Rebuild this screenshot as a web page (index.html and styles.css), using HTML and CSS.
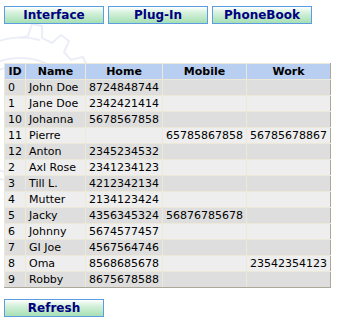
FILE: index.html
```html
<!DOCTYPE html>
<html lang="en">

<head>
    <meta charset="UTF-8">
    <title>PhoneBook</title>
    <link rel="stylesheet" href="styles.css">
</head>

<body>
    <svg class="watermark" width="180" height="200" viewBox="0 0 180 200">
        <g fill="none" stroke="#eceef7" stroke-width="2">
            <circle cx="20" cy="120" r="62" />
            <circle cx="20" cy="120" r="54" />
            <path d="M20 38 l8 -2 l4 -12 l10 2 l0 12 l10 5 l9 -8 l8 6 l-5 11 l7 8 l12 -3 l4 9 l-11 6 l2 10 l12 2 l-1 10 l-12 1 l-2 10" />
            <path d="M-30 60 q30 -30 70 -20" />
        </g>
    </svg>

    <div class="toolbar">
        <button class="btn">Interface</button>
        <button class="btn">Plug-In</button>
        <button class="btn">PhoneBook</button>
    </div>

    <table class="book">
        <tr>
            <th class="c-id">ID</th>
            <th class="c-name">Name</th>
            <th class="c-home">Home</th>
            <th class="c-mobile">Mobile</th>
            <th class="c-work">Work</th>
        </tr>
        <tr><td>0</td><td>John Doe</td><td>8724848744</td><td></td><td></td></tr>
        <tr><td>1</td><td>Jane Doe</td><td>2342421414</td><td></td><td></td></tr>
        <tr><td>10</td><td>Johanna</td><td>5678567858</td><td></td><td></td></tr>
        <tr><td>11</td><td>Pierre</td><td></td><td>65785867858</td><td>56785678867</td></tr>
        <tr><td>12</td><td>Anton</td><td>2345234532</td><td></td><td></td></tr>
        <tr><td>2</td><td>Axl Rose</td><td>2341234123</td><td></td><td></td></tr>
        <tr><td>3</td><td>Till L.</td><td>4212342134</td><td></td><td></td></tr>
        <tr><td>4</td><td>Mutter</td><td>2134123424</td><td></td><td></td></tr>
        <tr><td>5</td><td>Jacky</td><td>4356345324</td><td>56876785678</td><td></td></tr>
        <tr><td>6</td><td>Johnny</td><td>5674577457</td><td></td><td></td></tr>
        <tr><td>7</td><td>GI Joe</td><td>4567564746</td><td></td><td></td></tr>
        <tr><td>8</td><td>Oma</td><td>8568685678</td><td></td><td>23542354123</td></tr>
        <tr><td>9</td><td>Robby</td><td>8675678588</td><td></td><td></td></tr>
    </table>

    <div class="footer">
        <button class="btn">Refresh</button>
    </div>
</body>

</html>
```

FILE: styles.css
```css
body {
    margin: 0;
    padding: 6px 4px;
    background: #ffffff;
    font-family: "DejaVu Sans", Verdana, sans-serif;
    font-size: 11px;
    color: #000000;
    position: relative;
}

.watermark {
    position: absolute;
    left: 0;
    top: 0;
    z-index: -1;
}

.toolbar {
    display: flex;
    gap: 4px;
}

.btn {
    width: 100px;
    height: 18px;
    margin: 0;
    padding: 0;
    border: 1px solid #5c9ce0;
    background: linear-gradient(#ffffff 0%, #d6f1dc 35%, #a6e0b4 100%);
    color: #000080;
    font-family: "DejaVu Sans", Verdana, sans-serif;
    font-size: 12px;
    font-weight: bold;
    line-height: 16px;
}

table.book {
    margin-top: 39px;
    border-collapse: collapse;
    width: 327px;
    border-top: 1px solid #ece9d8;
    border-left: 1px solid #ece9d8;
    border-right: 1px solid #aca899;
    border-bottom: 1px solid #aca899;
}

.book th,
.book td {
    height: 15px;
    padding: 0 3px;
    border: 1px solid #ece9d8;
    white-space: nowrap;
    line-height: 15px;
}

.book th {
    background: #b9cff2;
    font-weight: bold;
    text-align: center;
}

.book td {
    text-align: left;
}

.book tr:nth-child(even) td {
    background: #dedede;
}

.book tr:nth-child(odd) td {
    background: #eeeeee;
}

.book tr:last-child td {
    border-bottom-color: #aca899;
}

.book tr td:last-child,
.book tr th:last-child {
    border-right-color: #aca899;
}

.c-id {
    width: 14px;
}

.c-name {
    width: 53px;
}

.c-home {
    width: 70px;
}

.c-mobile {
    width: 77px;
}

.footer {
    margin-top: 11px;
}
```
